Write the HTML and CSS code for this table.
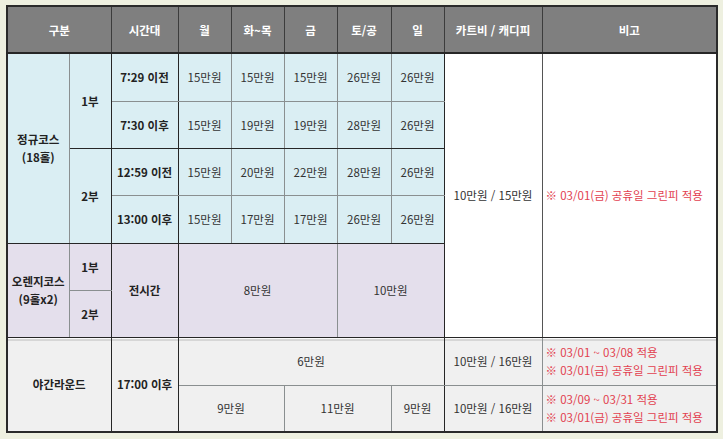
FILE: index.html
```html
<!DOCTYPE html>
<html lang="ko">
<head>
<meta charset="utf-8">
<title>요금표</title>
<link rel="stylesheet" href="styles.css">
</head>
<body>
<div class="wrap">
<table class="fee">
  <colgroup>
    <col class="c1"><col class="c2"><col class="c3"><col class="c4"><col class="c5">
    <col class="c6"><col class="c7"><col class="c8"><col class="c9"><col class="c10">
  </colgroup>
  <tr class="r47">
    <th colspan="2">구분</th>
    <th>시간대</th>
    <th>월</th>
    <th>화~목</th>
    <th>금</th>
    <th>토/공</th>
    <th>일</th>
    <th>카트비 / 캐디피</th>
    <th>비고</th>
  </tr>
  <tr class="r48 blue">
    <td rowspan="4" class="lbl bd">정규코스<br>(18홀)</td>
    <td rowspan="2" class="lbl rd bd">1부</td>
    <td class="lbl rd">7:29 이전</td>
    <td>15만원</td><td>15만원</td><td>15만원</td><td>26만원</td><td class="rd">26만원</td>
    <td rowspan="6" class="white bd">10만원 / 15만원</td>
    <td rowspan="6" class="white bd note">※ 03/01(금) 공휴일 그린피 적용</td>
  </tr>
  <tr class="r47 blue">
    <td class="lbl rd bd">7:30 이후</td>
    <td class="bd">15만원</td><td class="bd">19만원</td><td class="bd">19만원</td><td class="bd">28만원</td><td class="rd bd">26만원</td>
  </tr>
  <tr class="r47 blue">
    <td rowspan="2" class="lbl rd bd">2부</td>
    <td class="lbl rd">12:59 이전</td>
    <td>15만원</td><td>20만원</td><td>22만원</td><td>28만원</td><td class="rd">26만원</td>
  </tr>
  <tr class="r48 blue">
    <td class="lbl rd bd">13:00 이후</td>
    <td class="bd">15만원</td><td class="bd">17만원</td><td class="bd">17만원</td><td class="bd">26만원</td><td class="rd bd">26만원</td>
  </tr>
  <tr class="r47 purple">
    <td rowspan="2" class="lbl bd">오렌지코스<br>(9홀x2)</td>
    <td class="lbl rd">1부</td>
    <td rowspan="2" class="lbl rd bd">전시간</td>
    <td rowspan="2" colspan="3" class="bd">8만원</td>
    <td rowspan="2" colspan="2" class="rd bd">10만원</td>
  </tr>
  <tr class="r47 purple">
    <td class="lbl rd bd">2부</td>
  </tr>
  <tr class="r48 night first">
    <td rowspan="2" colspan="2" class="lbl rd">야간라운드</td>
    <td rowspan="2" class="lbl rd">17:00 이후</td>
    <td colspan="5" class="rd">6만원</td>
    <td>10만원 / 16만원</td>
    <td class="note">※ 03/01 ~ 03/08 적용<br>※ 03/01(금) 공휴일 그린피 적용</td>
  </tr>
  <tr class="r47 night">
    <td colspan="2">9만원</td>
    <td colspan="2">11만원</td>
    <td class="rd">9만원</td>
    <td>10만원 / 16만원</td>
    <td class="note">※ 03/09 ~ 03/31 적용<br>※ 03/01(금) 공휴일 그린피 적용</td>
  </tr>
</table>
</div>
</body>
</html>
```
FILE: styles.css
```css
html, body {
  margin: 0;
  padding: 0;
  background: #eef0e0;
}
body {
  font-family: "Noto Sans CJK KR", "Noto Sans", sans-serif;
  font-size: 11.5px;
  color: #333;
}
.wrap {
  padding: 5px 0 0 6px;
}
.fee {
  border-collapse: collapse;
  table-layout: fixed;
  width: 710px;
  border: 2px solid #2a2a2a;
}
.c1 { width: 62px; }
.c2 { width: 42px; }
.c3 { width: 67px; }
.c4 { width: 53px; }
.c5 { width: 53px; }
.c6 { width: 53px; }
.c7 { width: 54px; }
.c8 { width: 53px; }
.c9 { width: 98px; }
.c10 { width: 175px; }
.r47 { height: 47px; }
.r48 { height: 48px; }
.fee th,
.fee td {
  padding: 0;
  border: 0;
  border-right: 1px solid #8a8f90;
  border-bottom: 1px solid #8a8f90;
  text-align: center;
  vertical-align: middle;
  line-height: 18px;
  white-space: nowrap;
}
.fee th {
  background: #7f7f7f;
  color: #fff;
  font-weight: bold;
  border-right-color: #3c3c3c;
  border-bottom: 2px solid #262626;
}
.fee .rd { border-right-color: #262626; }
.fee .bd { border-bottom-color: #262626; }
.blue td { background: #daeef3; }
.purple td { background: #e4dfec; }
.night td { background: #f0f0f0; }
.fee td.white { background: #fff; border-right-color: #555; }
.fee td.lbl {
  font-weight: bold;
  color: #222;
}
.fee td.note {
  text-align: left;
  color: #e2404f;
  padding-left: 3px;
}
.first td {
  box-shadow: inset 0 1px 0 #fbfbfb, inset 0 3px 0 #d6d6d6;
}
```
